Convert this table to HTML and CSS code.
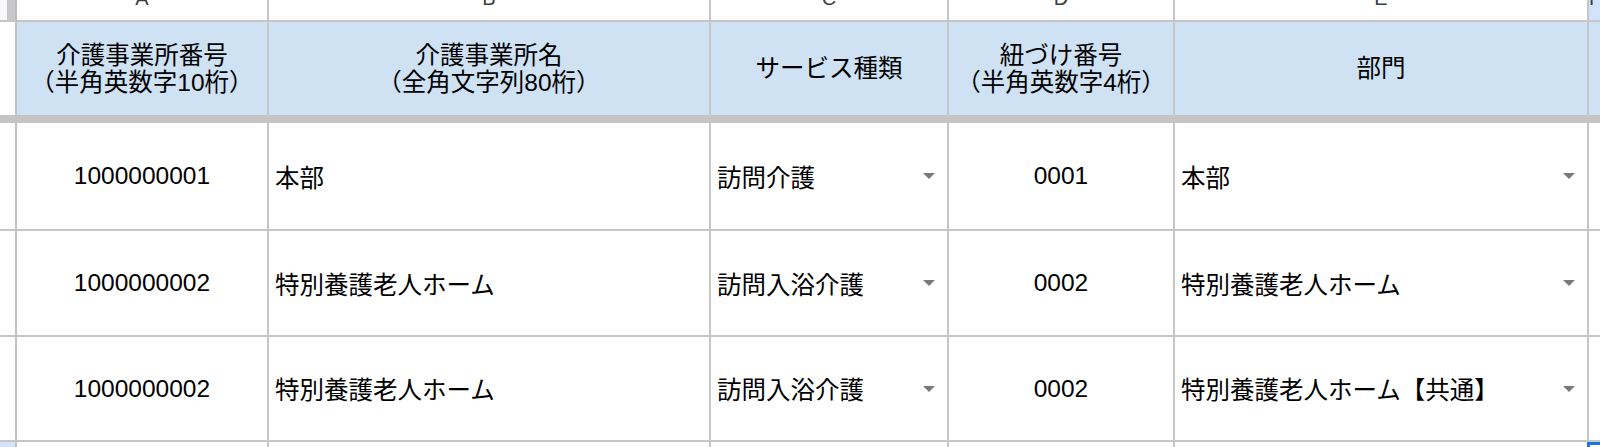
FILE: index.html
```html
<!DOCTYPE html>
<html lang="ja">
<head>
<meta charset="utf-8">
<title>Sheet</title>
<link rel="stylesheet" href="styles.css">
</head>
<body>
<div class="sheet">
  <div class="corner"><div class="corner-a"></div><div class="corner-b"></div></div>
  <div class="colhead"><span>A</span></div>
  <div class="colhead"><span>B</span></div>
  <div class="colhead"><span>C</span></div>
  <div class="colhead"><span>D</span></div>
  <div class="colhead"><span>E</span></div>
  <div class="colhead sel"><span>F</span></div>

  <div class="rowhead hdr"></div>
  <div class="cell hdr center"><div>介護事業所番号<br>（半角英数字10桁）</div></div>
  <div class="cell hdr center"><div>介護事業所名<br>（全角文字列80桁）</div></div>
  <div class="cell hdr center"><div>サービス種類</div></div>
  <div class="cell hdr center"><div>紐づけ番号<br>（半角英数字4桁）</div></div>
  <div class="cell hdr center"><div>部門</div></div>
  <div class="cell hdr last"></div>

  <div class="rowhead"></div>
  <div class="cell center num">1000000001</div>
  <div class="cell left">本部</div>
  <div class="cell drop"><span>訪問介護</span><i class="arrow"></i></div>
  <div class="cell center num">0001</div>
  <div class="cell drop"><span>本部</span><i class="arrow"></i></div>
  <div class="cell last"></div>

  <div class="rowhead"></div>
  <div class="cell center num">1000000002</div>
  <div class="cell left">特別養護老人ホーム</div>
  <div class="cell drop"><span>訪問入浴介護</span><i class="arrow"></i></div>
  <div class="cell center num">0002</div>
  <div class="cell drop"><span>特別養護老人ホーム</span><i class="arrow"></i></div>
  <div class="cell last"></div>

  <div class="rowhead"></div>
  <div class="cell center num">1000000002</div>
  <div class="cell left">特別養護老人ホーム</div>
  <div class="cell drop"><span>訪問入浴介護</span><i class="arrow"></i></div>
  <div class="cell center num">0002</div>
  <div class="cell drop"><span>特別養護老人ホーム【共通】</span><i class="arrow"></i></div>
  <div class="cell last"></div>

  <div class="rowhead selrow"></div>
  <div class="cell"></div>
  <div class="cell"></div>
  <div class="cell"></div>
  <div class="cell"></div>
  <div class="cell"></div>
  <div class="cell last active"></div>
</div>
</body>
</html>
```

FILE: styles.css
```css
html, body {
  margin: 0;
  padding: 0;
  background: #fff;
  width: 1600px;
  height: 447px;
  overflow: hidden;
}

.sheet {
  display: grid;
  grid-template-columns: 17px 252px 442px 238px 226px 414px 11px;
  grid-template-rows: 22px 101px 108px 106px 105px 20px;
  font-family: "Liberation Sans", "Noto Sans CJK JP", sans-serif;
  font-size: 24.5px;
  color: #000;
}

.corner {
  display: flex;
  border-right: 2px solid #bdbdbd;
  border-bottom: 2px solid #c6c6c6;
}
.corner-a {
  width: 7px;
  background: #f8f9fa;
  border-right: 1px solid #c6c6c6;
}
.corner-b {
  flex: 1;
  background: #c8c8c8;
}

.colhead {
  overflow: hidden;
  background: #fff;
  border-right: 2px solid #c6c6c6;
  border-bottom: 2px solid #c6c6c6;
  text-align: center;
  color: #3c4043;
  font-size: 20px;
}
.colhead span {
  display: block;
  line-height: 20px;
  margin-top: -12px;
}
.colhead.sel {
  background: #d3e3fd;
  border-right: none;
}

.rowhead {
  background: #fff;
  border-right: 2px solid #c2c2c2;
  border-bottom: 2px solid #c6c6c6;
}
.rowhead.hdr {
  border-bottom: 8px solid #c4c4c4;
}
.rowhead.selrow {
  background: #d3e3fd;
  border-bottom: none;
}

.cell {
  border-right: 2px solid #c6c6c6;
  border-bottom: 2px solid #c6c6c6;
  background: #fff;
  display: flex;
  align-items: center;
  min-width: 0;
  white-space: nowrap;
}
.cell.last {
  border-right: none;
}
.cell.hdr {
  background: #cfe2f3;
  border-bottom: 8px solid #c4c4c4;
  line-height: 27px;
}
.cell.center {
  justify-content: center;
  text-align: center;
}
.cell.left {
  padding-left: 6px;
}
.cell.drop {
  justify-content: space-between;
  padding: 0 12px 0 6px;
}

.arrow {
  display: block;
  width: 0;
  height: 0;
  border-left: 6px solid transparent;
  border-right: 6px solid transparent;
  border-top: 6px solid #7a7a7a;
}

.cell.active {
  border-bottom: none;
  border-top: 3px solid #1a73e8;
  border-left: 3px solid #1a73e8;
  margin-left: -2px;
}
```
